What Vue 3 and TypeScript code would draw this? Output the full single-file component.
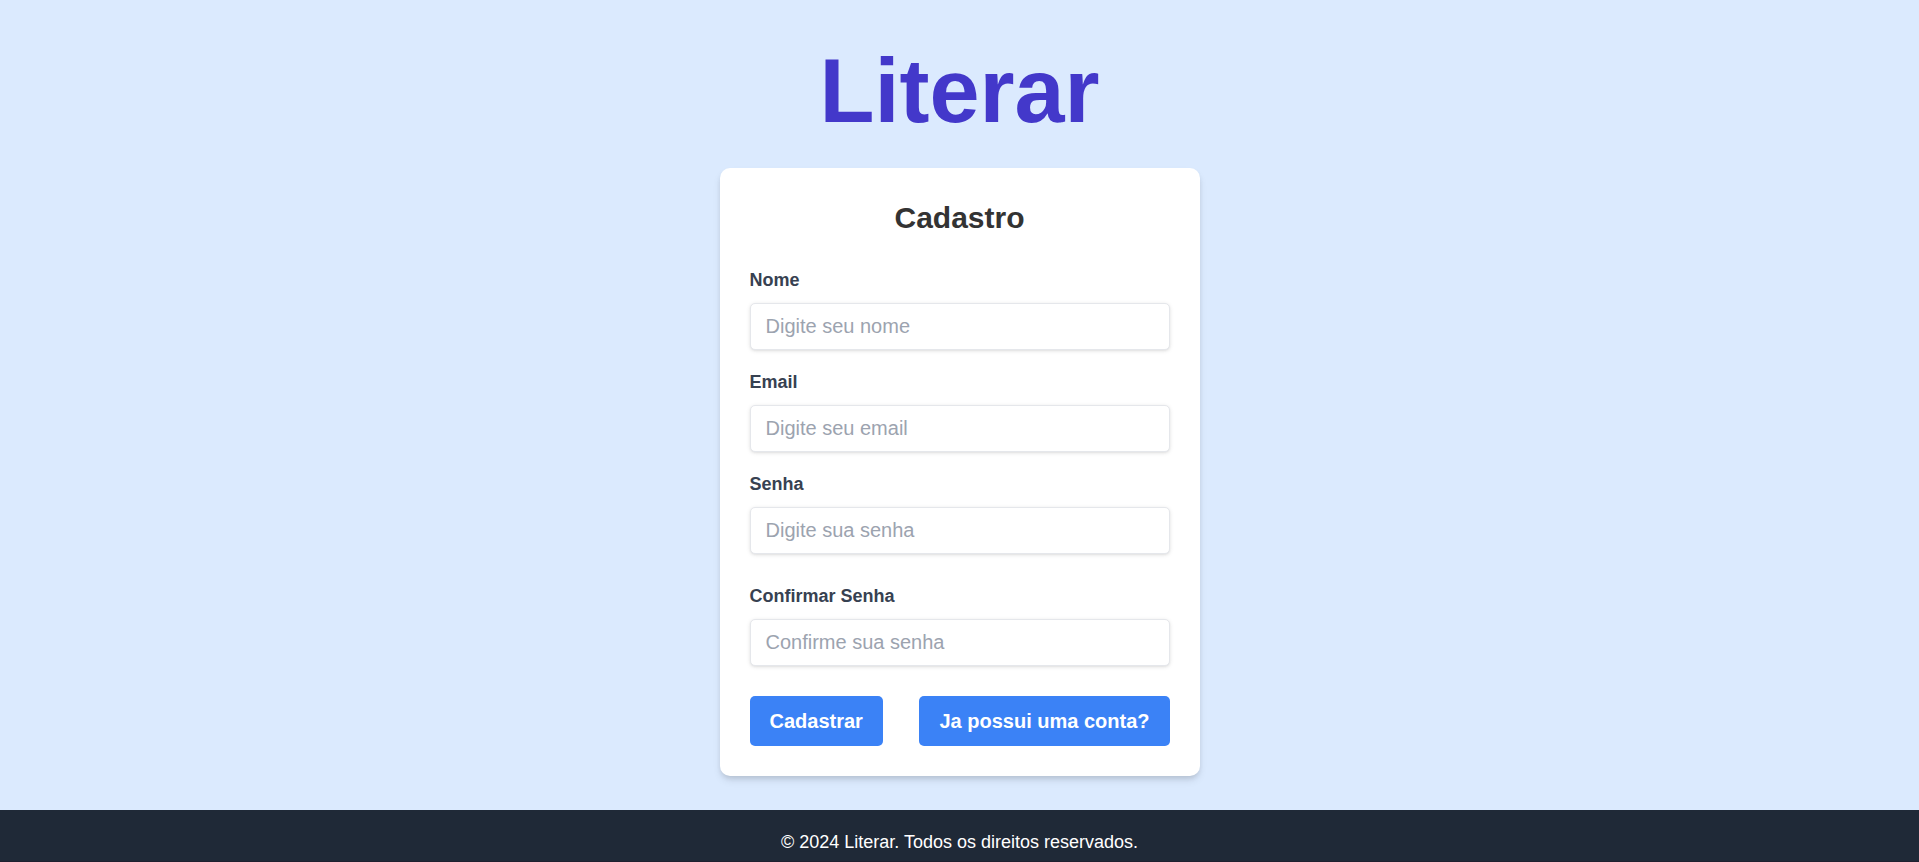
<script setup lang="ts">
import { ref } from 'vue'

interface Field {
  id: string
  label: string
  type: string
  placeholder: string
  spaced: boolean
}

const fields: Field[] = [
  { id: 'nome', label: 'Nome', type: 'text', placeholder: 'Digite seu nome', spaced: false },
  { id: 'email', label: 'Email', type: 'email', placeholder: 'Digite seu email', spaced: false },
  { id: 'senha', label: 'Senha', type: 'password', placeholder: 'Digite sua senha', spaced: true },
  { id: 'confirmar', label: 'Confirmar Senha', type: 'password', placeholder: 'Confirme sua senha', spaced: true },
]

const values = ref<Record<string, string>>({ nome: '', email: '', senha: '', confirmar: '' })
</script>

<template>
  <div class="page">
    <main class="content">
      <h1 class="brand">Literar</h1>
      <section class="card">
        <h2 class="title">Cadastro</h2>
        <form @submit.prevent>
          <div v-for="field in fields" :key="field.id" class="field" :class="{ spaced: field.spaced }">
            <label :for="field.id">{{ field.label }}</label>
            <input :id="field.id" v-model="values[field.id]" :type="field.type" :placeholder="field.placeholder" />
          </div>
          <div class="actions">
            <button type="submit">Cadastrar</button>
            <button type="button">Ja possui uma conta?</button>
          </div>
        </form>
      </section>
    </main>
    <footer class="footer">
      <p>© 2024 Literar. Todos os direitos reservados.</p>
    </footer>
  </div>
</template>

<style>
body {
  margin: 0;
}
</style>

<style scoped>
* {
  box-sizing: border-box;
}

.page {
  display: flex;
  flex-direction: column;
  min-height: 100vh;
  background: #dbeafe;
  font-family: "Liberation Sans", Arial, sans-serif;
  font-size: 20px;
  line-height: 30px;
}

.content {
  flex: 1;
  display: flex;
  flex-direction: column;
  align-items: center;
  padding: 46px 20px 32px;
}

.brand {
  margin: 0 0 32px;
  color: #4338ca;
  font-size: 90px;
  line-height: 90px;
  font-weight: 700;
}

.card {
  width: 100%;
  max-width: 480px;
  padding: 30px;
  background: #fff;
  border-radius: 10px;
  box-shadow: 0 5px 8px -1px rgb(0 0 0 / 10%), 0 3px 5px -1px rgb(0 0 0 / 10%);
}

.title {
  margin: 0 0 30px;
  color: #333;
  font-size: 30px;
  line-height: 40px;
  font-weight: 700;
  text-align: center;
}

.field {
  margin-bottom: 20px;
}

.field.spaced {
  margin-bottom: 30px;
}

label {
  display: block;
  margin-bottom: 10px;
  color: #374151;
  font-size: 18px;
  line-height: 25px;
  font-weight: 700;
}

input {
  display: block;
  width: 100%;
  padding: 10px 15px;
  border: 1px solid #e5e7eb;
  border-radius: 5px;
  background: #fff;
  color: #374151;
  font: inherit;
  font-size: 20px;
  line-height: 25px;
  box-shadow: 0 1px 4px rgb(0 0 0 / 10%), 0 1px 3px -1px rgb(0 0 0 / 10%);
}

input::placeholder {
  color: #9ca3af;
}

.actions {
  display: flex;
  justify-content: space-between;
}

button {
  padding: 10px 20px;
  border: 0;
  border-radius: 5px;
  background: #3b82f6;
  color: #fff;
  font: inherit;
  font-weight: 700;
  cursor: pointer;
}

.footer {
  padding: 20px 20px 6px;
  border-bottom: 1px solid #1f2030;
  background: #1f2937;
  color: #fff;
  font-size: 18px;
  line-height: 25px;
  text-align: center;
}

.footer p {
  margin: 0;
}
</style>
